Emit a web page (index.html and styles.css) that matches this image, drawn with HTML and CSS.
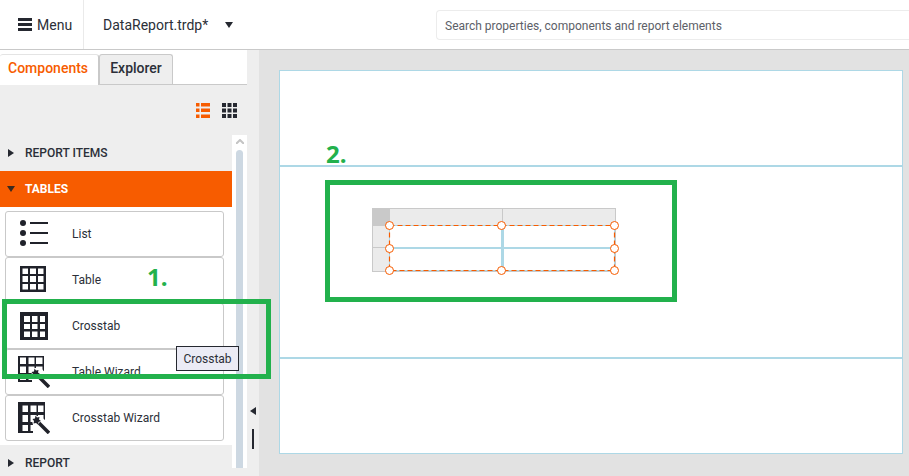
FILE: index.html
```html
<!DOCTYPE html>
<html lang="en">
<head>
  <meta charset="UTF-8">
  <meta name="viewport" content="width=device-width, initial-scale=1.0">
  <title>Web Report Designer</title>
  <link rel="stylesheet" href="styles.css">
</head>
<body>
  <header class="topbar">
    <div class="menu-btn">
      <svg width="14" height="13" viewBox="0 0 14 13"><path d="M0 0h14v3H0zM0 5h14v3H0zM0 10h14v3H0z" fill="#252830"/></svg>
      <span>Menu</span>
    </div>
    <div class="doc-name">
      <span>DataReport.trdp*</span>
      <svg width="8" height="6" viewBox="0 0 8 6"><path d="M0 0h8L4 6z" fill="#252830"/></svg>
    </div>
    <div class="search">Search properties, components and report elements</div>
  </header>

  <main class="workspace">
    <aside class="sidebar">
      <div class="panel">
        <nav class="tabs">
          <div class="tab active">Components</div>
          <div class="tab">Explorer</div>
        </nav>
        <div class="view-switch">
          <svg width="14" height="15" viewBox="0 0 14 15" fill="#f75c00"><path d="M0 0h3.500v3.500H0zM5 0h9v3.500H5zM0 5.500h3.500V9H0zM5 5.500h9V9H5zM0 11.500h3.500V15H0zM5 11.500h9V15H5z"/></svg>
          <svg width="15" height="15" viewBox="0 0 15 15" fill="#252830"><path d="M0 0h4v4H0zM5.500 0h4v4h-4zM11 0h4v4h-4zM0 5.500h4v4H0zM5.500 5.500h4v4h-4zM11 5.500h4v4h-4zM0 11h4v4H0zM5.500 11h4v4h-4zM11 11h4v4h-4z"/></svg>
        </div>
        <div class="tree">
          <div class="tree-list">
            <div class="group">
              <svg width="6" height="8" viewBox="0 0 6 8"><path d="M0 0l6 4-6 4z" fill="#252830"/></svg>
              REPORT ITEMS
            </div>
            <div class="group open">
              <svg width="8" height="6" viewBox="0 0 8 6"><path d="M0 0h8L4 6z" fill="#3a2a20"/></svg>
              TABLES
            </div>
            <div class="items">
              <div class="item">
                <span class="item-icon raised">
                  <svg width="28" height="26" viewBox="0 0 28 26" fill="#20222a"><circle cx="3" cy="3" r="3"/><circle cx="3" cy="13" r="3"/><circle cx="3" cy="23" r="3"/><path d="M10 2h18v2H10zM10 12h18v2H10zM10 22h18v2H10z"/></svg>
                </span>
                List
              </div>
              <div class="item">
                <span class="item-icon raised">
                  <svg width="26" height="26" viewBox="0 0 26 26" fill="#20222a" fill-rule="evenodd"><path d="M0 0h26v26H0zM2.500 2.500h5.500V8H2.500zM10 2.500h6V8h-6zM18 2.500h5.500V8H18zM2.500 10h5.500v6H2.500zM10 10h6v6h-6zM18 10h5.500v6H18zM2.500 18h5.500v5.500H2.500zM10 18h6v5.500h-6zM18 18h5.500v5.500H18z"/></svg>
                </span>
                Table
              </div>
              <div class="item">
                <span class="item-icon">
                  <svg width="28" height="28" viewBox="0 0 28 28" fill="#20222a" fill-rule="evenodd"><path d="M0 0h28v28H0zM4 4h6v6H4zM12 4h5.500v6H12zM20 4h5v6h-5zM4 12h6v5H4zM12 12h5.500v5H12zM20 12h5v5h-5zM4 19.500h6v5.500H4zM12 19.500h5.500v5.500H12zM20 19.500h5v5.500h-5z"/></svg>
                </span>
                Crosstab
              </div>
              <div class="item">
                <span class="item-icon wizard">
                  <svg width="32" height="32" viewBox="0 0 32 32" fill="#20222a"><path fill-rule="evenodd" d="M0 0h26v26H0zM2 1.500h6V8H2zM10.500 1.500h6V8h-6zM18 1.500h6.500V8H18zM2 10.500h6V17H2zM10.500 10.500h6V17h-6zM18 10.500h6.500V17H18zM2 19.500h6V24H2zM10.500 19.500h6V24h-6zM18 19.500h6.500V24H18z"/><path d="M13 12h10l9 10v10H14V20z" fill="#fff"/><path d="M16.500 12.500l1.500 2 2.500-.5-.5 2.500 2 1.500-2.500 1-.5 2.500-2-1.500-2.500.5.500-2.500-1.500-2 2.500-.5z"/><path d="M20 20l11 11" stroke="#20222a" stroke-width="3.500"/></svg>
                </span>
                Table Wizard
              </div>
              <div class="item">
                <span class="item-icon wizard">
                  <svg width="32" height="32" viewBox="0 0 32 32" fill="#20222a"><path fill-rule="evenodd" d="M0 0h27v31H0zM4.500 3.500H10V10H4.500zM12.500 3.500h6V10h-6zM20 3.500h5.500V10H20zM4.500 13H10v7H4.500zM12.500 13h6v7h-6zM20 13h5.500v7H20zM4.500 23H10v6H4.500zM12.500 23h6v6h-6zM20 23h5.500v6H20z"/><path d="M13 14h9l5 4h5v14H15v-9z" fill="#fff"/><path d="M17.500 13.500l1.500 2 2.500-.5-.5 2.500 2 1.500-2.500 1-.5 2.500-2-1.500-2.500.5.500-2.500-1.500-2 2.500-.5z"/><path d="M21 21l10 10" stroke="#20222a" stroke-width="3.500"/></svg>
                </span>
                Crosstab Wizard
              </div>
            </div>
            <div class="group">
              <svg width="6" height="8" viewBox="0 0 6 8"><path d="M0 0l6 4-6 4z" fill="#252830"/></svg>
              REPORT
            </div>
          </div>
          <div class="scrollbar">
            <svg width="8" height="5" viewBox="0 0 8 5"><path d="M0 5l4-4 4 4" fill="none" stroke="#c4c4c4" stroke-width="2"/></svg>
            <div class="thumb"></div>
          </div>
        </div>
      </div>
      <div class="collapser">
        <svg width="6" height="8" viewBox="0 0 6 8"><path d="M6 0v8L0 4z" fill="#252830"/></svg>
        <div class="grip"></div>
      </div>
    </aside>

    <section class="canvas">
      <div class="page">
        <div class="band band-top"></div>
        <div class="band band-middle"></div>
        <div class="band band-bottom"></div>
        <div class="crosstab">
          <div class="corner"></div>
          <div class="col-head"></div>
          <div class="col-head"></div>
          <div class="row-head"></div>
          <div class="cell"></div>
          <div class="cell"></div>
          <div class="row-head"></div>
          <div class="cell"></div>
          <div class="cell"></div>
        </div>
        <div class="selection">
          <svg class="dashes" width="228" height="48" viewBox="0 0 228 48" fill="none">
            <rect x="1.500" y="0.500" width="225" height="45" stroke="#add8e6"/>
            <rect x="1.500" y="0.500" width="225" height="45" stroke="#f75c00" stroke-width="1.200" stroke-dasharray="5 3"/>
          </svg>
          <i class="handle h-tl"></i><i class="handle h-tc"></i><i class="handle h-tr"></i>
          <i class="handle h-ml"></i><i class="handle h-mr"></i>
          <i class="handle h-bl"></i><i class="handle h-bc"></i><i class="handle h-br"></i>
        </div>
      </div>
    </section>
  </main>

  <div class="tooltip">Crosstab</div>
  <div class="callout callout-source"></div>
  <div class="callout callout-target"></div>
  <div class="step step-one">1.</div>
  <div class="step step-two">2.</div>
</body>
</html>
```

FILE: styles.css
```css
html, body {
  height: 100%;
  margin: 0;
  padding: 0;
}
body {
  display: flex;
  flex-direction: column;
  height: 476px;
  overflow: hidden;
  font-family: Roboto, sans-serif;
  font-size: 12px;
  color: #2b2f38;
  background: #fff;
}
.topbar {
  display: flex;
  align-items: center;
  flex: none;
  height: 49px;
  border-bottom: 1px solid #c9c9c9;
  background: #fff;
}
.menu-btn {
  display: flex;
  align-items: center;
  gap: 5px;
  height: 49px;
  width: 84px;
  padding-left: 18px;
  box-sizing: border-box;
  border-right: 1px solid #eaeaea;
  font-size: 14px;
}
.doc-name {
  display: flex;
  align-items: center;
  gap: 17px;
  padding-left: 19px;
  width: 352px;
  box-sizing: border-box;
  font-size: 14px;
}
.search {
  flex: 1;
  height: 30px;
  margin-top: 1px;
  line-height: 30px;
  padding-left: 8px;
  box-sizing: border-box;
  border: 1px solid #ececec;
  border-right: none;
  border-radius: 4px 0 0 4px;
  color: #5c6068;
}
.workspace {
  display: flex;
  flex: 1;
  min-height: 0;
}
.sidebar {
  display: flex;
  flex: none;
  width: 259px;
  background: #eee;
}
.panel {
  display: flex;
  flex-direction: column;
  width: 247px;
}
.tabs {
  display: flex;
  align-items: flex-end;
  flex: none;
  height: 35px;
  box-sizing: border-box;
  border-bottom: 1px solid #c9c9c9;
  background: #fff;
}
.tab {
  width: 74px;
  height: 30px;
  line-height: 27px;
  box-sizing: border-box;
  text-align: center;
  font-size: 14px;
  font-weight: 500;
  border: 1px solid #c9c9c9;
  border-bottom: none;
  border-radius: 3px 3px 0 0;
  background: #eee;
}
.tab.active {
  width: 99px;
  height: 31px;
  margin-bottom: -1px;
  padding-left: 8px;
  text-align: left;
  border-color: #e4e4e4 #c9c9c9 #fff #fff;
  border-left: none;
  background: #fff;
  color: #f75c00;
}
.view-switch {
  display: flex;
  justify-content: flex-end;
  align-items: center;
  gap: 12px;
  flex: none;
  height: 50px;
  padding-right: 10px;
}
.tree {
  display: flex;
  height: 333px;
  flex: none;
}
.tree-list {
  width: 232px;
  flex: none;
}
.group {
  display: flex;
  align-items: center;
  gap: 11px;
  height: 36px;
  padding-left: 8px;
  font-weight: 500;
  font-size: 12px;
}
.group.open {
  gap: 10px;
  padding-left: 7px;
  background: #f75c00;
  color: #fff;
  font-weight: 700;
}
.items {
  display: flex;
  flex-direction: column;
  padding: 4px 8px 4px 5px;
  background: #fff;
}
.item {
  display: flex;
  align-items: center;
  height: 46px;
  box-sizing: border-box;
  border: 1px solid #c9c9c9;
  border-radius: 3px;
  background: #fff;
}
.item-icon {
  display: flex;
  flex: none;
  width: 66px;
  padding-left: 14px;
  box-sizing: border-box;
}
.item-icon.raised {
  margin-bottom: 2px;
}
.item-icon.wizard {
  padding-left: 12px;
}
.scrollbar {
  display: flex;
  flex-direction: column;
  align-items: center;
  gap: 6px;
  width: 15px;
  padding-top: 4px;
  background: #fff;
}
.thumb {
  flex: 1;
  width: 7px;
  border-radius: 4px 4px 0 0;
  background: #cdd8e2;
}
.collapser {
  display: flex;
  flex-direction: column;
  align-items: center;
  gap: 14px;
  flex: 1;
  padding-top: 357px;
}
.grip {
  width: 2px;
  height: 20px;
  background: #252830;
}
.canvas {
  flex: 1;
  padding: 20px 6px 22px 20px;
  background: #e2e2e2;
}
.page {
  position: relative;
  display: flex;
  flex-direction: column;
  height: 100%;
  box-sizing: border-box;
  border: 1px solid #add8e6;
  background: #fff;
}
.band {
  border-bottom: 2px solid #add8e6;
}
.band-top {
  height: 94px;
}
.band-middle {
  height: 190px;
}
.band-bottom {
  flex: 1;
  border-bottom: none;
}
.crosstab {
  position: absolute;
  left: 92px;
  top: 137px;
  display: grid;
  grid-template-columns: 17px 112px 113px;
  grid-template-rows: 17px 21px 24px;
  width: 244px;
  height: 64px;
  box-sizing: border-box;
  border: 1px solid #c9c9c9;
}
.corner {
  background: #c9c9c9;
}
.col-head {
  background: #ebebeb;
  border-left: 1px solid #c9c9c9;
}
.col-head:nth-child(2) {
  border-left: none;
}
.row-head {
  background: #ebebeb;
  border-top: 1px solid #c9c9c9;
}
.row-head:nth-child(4) {
  border-top: none;
}
.cell {
  border-top: 2px solid #add8e6;
}
.cell:nth-child(5), .cell:nth-child(6) {
  border-top: none;
}
.cell:nth-child(6), .cell:nth-child(9) {
  border-left: 2px solid #add8e6;
  box-shadow: -1px 0 0 #add8e6;
}
.selection {
  position: absolute;
  left: 108px;
  top: 154px;
  width: 226px;
  height: 46px;
}
.dashes {
  position: absolute;
  left: 0;
  top: 0;
}
.handle {
  position: absolute;
  width: 7px;
  height: 7px;
  border: 1px solid #f75c00;
  border-radius: 50%;
  background: #fff;
}
.h-tl { left: -3px; top: -4px; }
.h-tc { left: 109px; top: -4px; }
.h-tr { left: 222px; top: -4px; }
.h-ml { left: -3px; top: 19px; }
.h-mr { left: 222px; top: 19px; }
.h-bl { left: -3px; top: 41px; }
.h-bc { left: 109px; top: 41px; }
.h-br { left: 222px; top: 41px; }
.tooltip {
  position: absolute;
  left: 176px;
  top: 346px;
  width: 63px;
  height: 25px;
  line-height: 24px;
  box-sizing: border-box;
  text-align: center;
  border: 1px solid #252830;
  background: #ebebf5;
}
.callout {
  position: absolute;
  box-sizing: border-box;
  border: 5px solid #22b14c;
}
.callout-source {
  left: 2px;
  top: 299px;
  width: 269px;
  height: 80px;
}
.callout-target {
  left: 325px;
  top: 180px;
  width: 352px;
  height: 122px;
}
.step {
  position: absolute;
  font-family: "Open Sans", sans-serif;
  font-size: 24px;
  font-weight: 700;
  line-height: 28px;
  color: #22b14c;
}
.step-one {
  left: 147px;
  top: 263px;
}
.step-two {
  left: 326px;
  top: 140px;
}
```
